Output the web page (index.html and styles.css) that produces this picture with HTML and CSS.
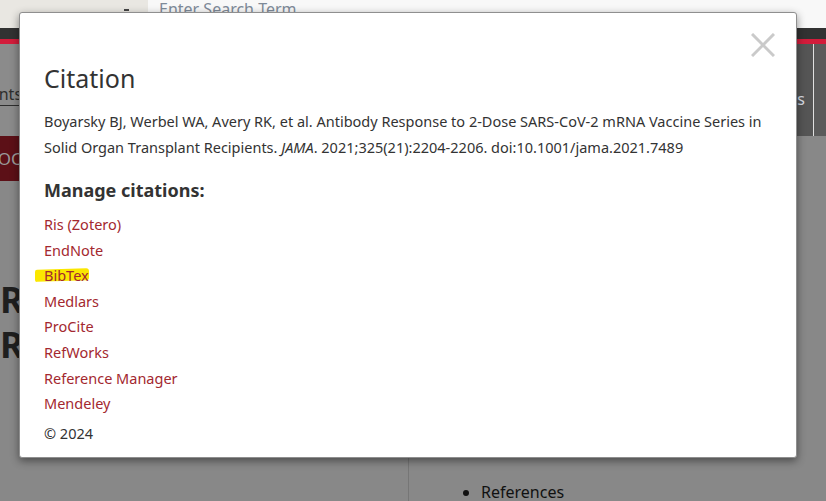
FILE: index.html
```html
<!DOCTYPE html>
<html lang="en">
<head>
<meta charset="utf-8">
<title>Citation</title>
<link rel="stylesheet" href="styles.css">
</head>
<body>
<div class="page">
  <div class="topbar">
    <div class="brand"><span class="caret"></span></div>
    <div class="search">Enter Search Term</div>
  </div>
  <div class="darkbar"></div>
  <div class="redbar"></div>
  <div class="nav">
    <div class="nav-left"><a class="nav-link">Comments</a></div>
    <div class="nav-right">
      <span class="nav-item">Figures &amp; Tables</span>
      <span class="nav-item last"></span>
    </div>
  </div>
  <div class="content">
    <div class="main">
      <div class="badge">IOC</div>
      <h1 class="article-title">R<br>Re</h1>
    </div>
    <div class="aside">
      <ul class="toc">
        <li>References</li>
      </ul>
    </div>
  </div>
</div>

<div class="modal">
  <button class="close" aria-label="Close">
    <svg viewBox="0 0 24 24" width="24" height="24"><path d="M1 1 L23 23 M23 1 L1 23" stroke="#cacaca" stroke-width="3" fill="none"/></svg>
  </button>
  <h2 class="modal-title">Citation</h2>
  <p class="citation">Boyarsky BJ, Werbel WA, Avery RK, et al. Antibody Response to 2-Dose SARS-CoV-2 mRNA Vaccine Series in Solid Organ Transplant Recipients. <em>JAMA</em>. 2021;325(21):2204‑2206. doi:10.1001/jama.2021.7489</p>
  <h3 class="manage">Manage citations:</h3>
  <ul class="formats">
    <li><a href="#">Ris (Zotero)</a></li>
    <li><a href="#">EndNote</a></li>
    <li class="marked"><a href="#">BibTex</a></li>
    <li><a href="#">Medlars</a></li>
    <li><a href="#">ProCite</a></li>
    <li><a href="#">RefWorks</a></li>
    <li><a href="#">Reference Manager</a></li>
    <li><a href="#">Mendeley</a></li>
  </ul>
  <p class="copy">© 2024</p>
</div>
</body>
</html>
```

FILE: styles.css
```css
html, body {
  margin: 0;
  padding: 0;
}
body {
  width: 826px;
  height: 501px;
  overflow: hidden;
  position: relative;
  background: #888888;
  font-family: "Noto Sans", "Open Sans", Arial, sans-serif;
}

/* ---------- background page ---------- */
.page {
  display: flex;
  flex-direction: column;
  height: 501px;
}
.page > * {
  flex-shrink: 0;
}
.topbar {
  display: flex;
  height: 28px;
}
.brand {
  width: 148px;
  background: #e9e7e2;
  position: relative;
}
.caret {
  position: absolute;
  left: 124px;
  top: 9px;
  width: 5px;
  height: 2px;
  background: #444;
}
.search {
  flex: 1;
  background: #f8f8f8;
  color: #7e8a98;
  font-size: 16px;
  line-height: 20px;
  padding-left: 11px;
  margin-top: -1px;
}
.darkbar {
  height: 11px;
  background: #323232;
}
.redbar {
  height: 5px;
  background: #d31c3b;
}
.nav {
  display: flex;
  height: 92px;
}
.nav-left {
  width: 400px;
  background: #8b8b8b;
  padding-top: 39px;
  box-sizing: border-box;
  margin-left: -60px;
}
.nav-link {
  color: #2e2e2e;
  font-size: 16px;
  text-decoration: underline;
  text-underline-offset: 5px;
}
.nav-right {
  flex: 1;
  display: flex;
  justify-content: flex-end;
  background: #555555;
}
.nav-item {
  color: #d8dde6;
  font-size: 16px;
  padding-top: 44px;
  padding-right: 8px;
  border-right: 1px solid #e0e0e0;
}
.nav-item.last {
  width: 12px;
  border-right: 0;
  padding: 0;
  background: #5b5b5b;
}
.content {
  flex: 1 1 auto;
  display: flex;
  min-height: 0;
  overflow: hidden;
}
.main {
  width: 408px;
}
.badge {
  width: 180px;
  height: 45px;
  background: #5c1017;
  color: #9a9a9a;
  font-size: 17px;
  line-height: 45px;
  margin-left: -8px;
}
.article-title {
  margin: 96px 0 0 0;
  font-size: 36px;
  line-height: 45px;
  font-weight: 700;
  color: #1f1f1f;
}
.aside {
  flex: 1;
  border-left: 1px solid #767676;
}
.toc {
  margin: 0;
  padding: 344px 0 0 72px;
  color: #111;
  font-size: 16px;
  line-height: 24px;
}

/* ---------- modal ---------- */
.modal {
  position: absolute;
  left: 19px;
  top: 12px;
  width: 778px;
  height: 446px;
  box-sizing: border-box;
  background: #ffffff;
  border: 1px solid #8f8f8f;
  border-radius: 3px;
  box-shadow: 0 3px 9px rgba(0, 0, 0, 0.45);
  padding: 47px 24px 0 24px;
  color: #333333;
}
.close {
  position: absolute;
  top: 20px;
  right: 21px;
  width: 24px;
  height: 24px;
  padding: 0;
  border: 0;
  background: none;
  display: flex;
}
.modal-title {
  margin: 0;
  font-size: 25px;
  line-height: 36px;
  font-weight: 400;
  color: #333;
}
.citation {
  margin: 13px 0 0 0;
  font-size: 14.5px;
  line-height: 25.5px;
}
.citation em {
  font-style: italic;
}
.manage {
  margin: 17px 0 0 0;
  font-size: 18px;
  line-height: 26px;
  font-weight: 700;
  color: #333;
}
.formats {
  list-style: none;
  margin: 9px 0 0 0;
  padding: 0;
  font-size: 14.5px;
  line-height: 25.6px;
  isolation: isolate;
}
.formats a {
  color: #a3282f;
  text-decoration: none;
}
.marked {
  position: relative;
}
.marked::before {
  content: "";
  position: absolute;
  left: -9px;
  top: 6px;
  width: 54px;
  height: 12px;
  background: #fbe700;
  border-radius: 2px 3px 2px 2px;
  transform: skewY(-2deg);
  z-index: -1;
}
.copy {
  margin: 4px 0 0 0;
  font-size: 14.5px;
  line-height: 25.5px;
  color: #333;
}
```
